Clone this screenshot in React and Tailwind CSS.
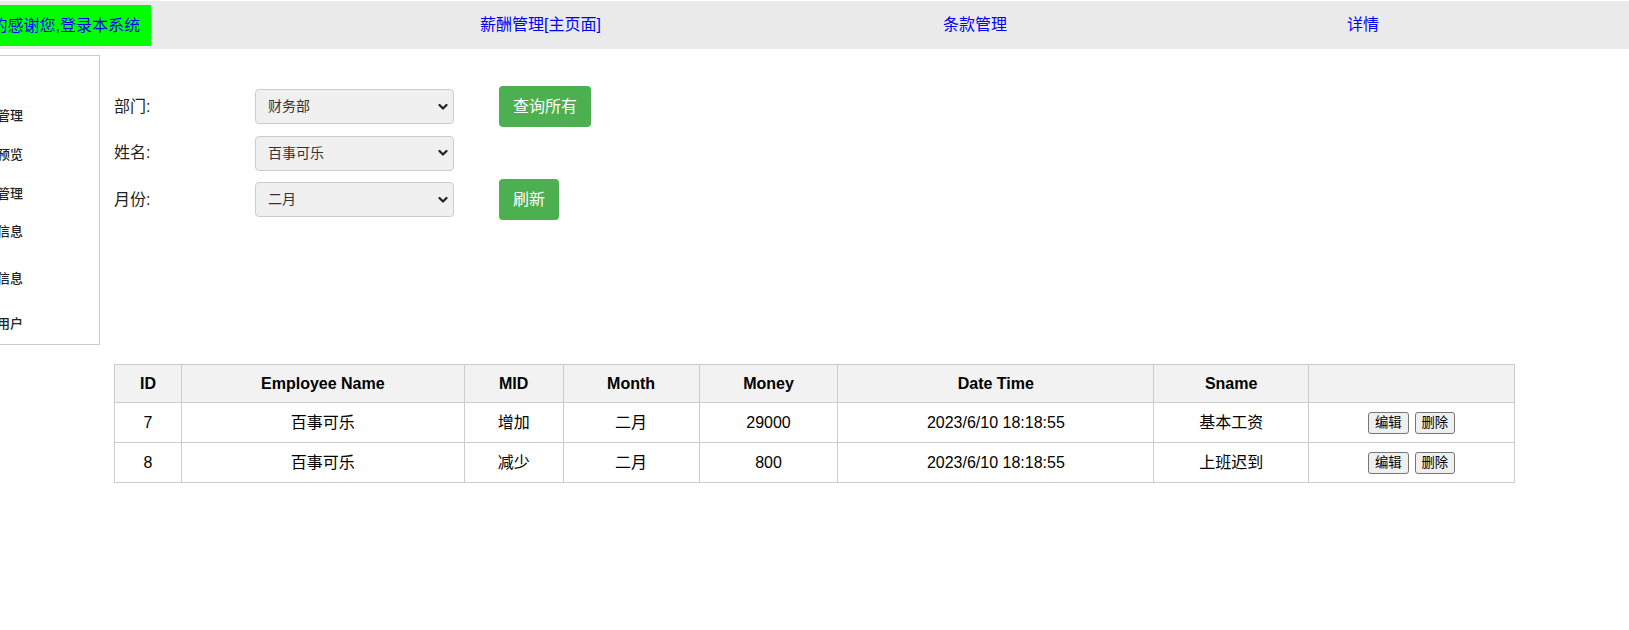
import React from 'react';

const font = "font-['Liberation_Sans','Noto_Sans_CJK_SC',sans-serif]";

const sideItems = [
  { label: '薪酬管理', mt: 'mt-[51px]' },
  { label: '薪酬预览', mt: 'mt-[21px]' },
  { label: '条款管理', mt: 'mt-[21px]' },
  { label: '个人信息', mt: 'mt-[20px]' },
  { label: '员工信息', mt: 'mt-[29px]' },
  { label: '添加用户', mt: 'mt-[27px]' },
];

const rows = [
  { id: 7, name: '百事可乐', mid: '增加', month: '二月', money: 29000, time: '2023/6/10 18:18:55', sname: '基本工资' },
  { id: 8, name: '百事可乐', mid: '减少', month: '二月', money: 800, time: '2023/6/10 18:18:55', sname: '上班迟到' },
];

const Chevron = () => (
  <svg className="pointer-events-none absolute right-[6px] top-1/2 -translate-y-1/2" width="10" height="7" viewBox="0 0 10 7">
    <path d="M1.5 1.5 L5 5 L8.5 1.5" fill="none" stroke="#222" strokeWidth="2.2" strokeLinecap="round" strokeLinejoin="round" />
  </svg>
);

const Select = ({ value }) => (
  <div className="relative w-[199px] h-[35px]">
    <select
      defaultValue={value}
      className="appearance-none w-full h-full rounded-[4px] border border-[#cccccc] bg-[#f0f0f0] pl-[12px] text-[14px] text-[#333] outline-none"
    >
      <option>{value}</option>
    </select>
    <Chevron />
  </div>
);

const GreenButton = ({ children }) => (
  <button className="h-[41px] px-[14px] rounded-[4px] bg-[#4caf50] text-white text-[16px]">{children}</button>
);

const FormRow = ({ label, value, button }) => (
  <div className="flex items-center h-[41px]">
    <div className="w-[141px] text-[16px] text-[#222]">{label}</div>
    <Select value={value} />
    {button && <div className="ml-[45px]"><GreenButton>{button}</GreenButton></div>}
  </div>
);

const SmallBtn = ({ children }) => (
  <button className="px-[6px] h-[22px] text-[13.33px] leading-none border border-[#767676] rounded-[3px] bg-[#efefef] text-black">{children}</button>
);

export default function App() {
  const th = 'border border-[#cccccc] font-bold text-[16px] text-black';
  const td = 'border border-[#cccccc] text-[16px] text-black';
  return (
    <div className={`w-[1629px] h-[630px] bg-white overflow-hidden ${font}`}>
      {/* top bar */}
      <header className="mt-px h-[48px] bg-[#eaeaea] flex items-center text-[16px] text-[#0000ff]">
        <div className="self-start mt-[4px] h-[41px] w-[151px] bg-[#00ff00] flex items-center justify-end pr-[11px] overflow-hidden whitespace-nowrap">
          非常的感谢您,登录本系统
        </div>
        <div className="ml-[329px] w-[463px]">薪酬管理[主页面]</div>
        <div className="w-[404px]">条款管理</div>
        <div>详情</div>
      </header>

      <div className="flex mt-[6px]">
        {/* side menu */}
        <aside className="w-[100px] h-[290px] border-y border-r border-[#cccccc] overflow-hidden">
          {sideItems.map((it) => (
            <div key={it.label} className={`${it.mt} h-[18px] leading-[18px] flex justify-end pr-[76px] whitespace-nowrap text-[13px] font-medium text-[#222]`}>
              {it.label}
            </div>
          ))}
        </aside>

        {/* query form */}
        <div className="ml-[14px] mt-[31px] flex flex-col gap-[5.5px]">
          <FormRow label="部门:" value="财务部" button="查询所有" />
          <FormRow label="姓名:" value="百事可乐" />
          <FormRow label="月份:" value="二月" button="刷新" />
        </div>
      </div>

      {/* salary table */}
      <table className="ml-[114px] mt-[19px] w-[1401px] border-collapse text-center">
        <thead>
          <tr className="h-[38px] bg-[#f2f2f2]">
            <th className={`${th} w-[67px]`}>ID</th>
            <th className={`${th} w-[283px]`}>Employee Name</th>
            <th className={`${th} w-[99px]`}>MID</th>
            <th className={`${th} w-[136px]`}>Month</th>
            <th className={`${th} w-[139px]`}>Money</th>
            <th className={`${th} w-[316px]`}>Date Time</th>
            <th className={`${th} w-[155px]`}>Sname</th>
            <th className={`${th} w-[206px]`}></th>
          </tr>
        </thead>
        <tbody>
          {rows.map((r) => (
            <tr key={r.id} className="h-[40px]">
              <td className={td}>{r.id}</td>
              <td className={td}>{r.name}</td>
              <td className={td}>{r.mid}</td>
              <td className={td}>{r.month}</td>
              <td className={td}>{r.money}</td>
              <td className={td}>{r.time}</td>
              <td className={td}>{r.sname}</td>
              <td className={td}>
                <div className="flex justify-center gap-[6px]">
                  <SmallBtn>编辑</SmallBtn>
                  <SmallBtn>删除</SmallBtn>
                </div>
              </td>
            </tr>
          ))}
        </tbody>
      </table>
    </div>
  );
}
